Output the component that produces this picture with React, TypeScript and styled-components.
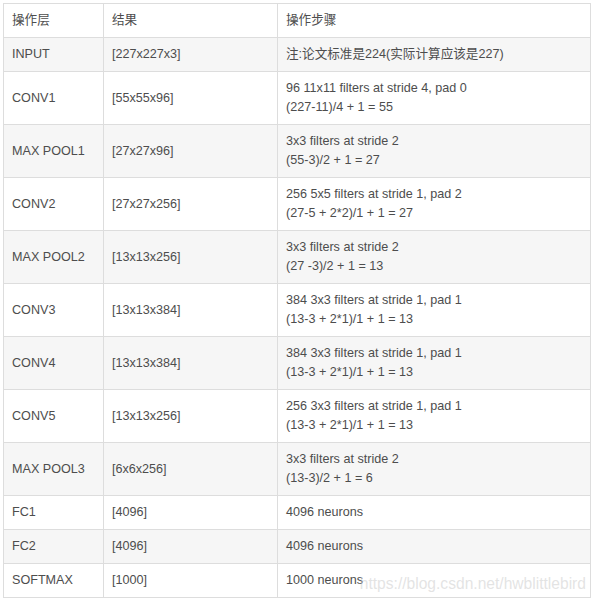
import React from "react";
import styled, { createGlobalStyle } from "styled-components";

const Global = createGlobalStyle`
  html, body { margin: 0; padding: 0; background: #fff; }
  body { font-family: "Liberation Sans", Arial, sans-serif; }
`;

const Wrap = styled.div`
  position: relative;
  padding: 3px;
  width: 588px;
`;

const Table = styled.table`
  border-collapse: collapse;
  width: 588px;
  table-layout: fixed;
  font-family: "Liberation Sans", Arial, "Noto Sans CJK SC", sans-serif;
  font-size: 12.6px;
  color: #4d4d4d;
`;

const Row = styled.tr<{ $striped?: boolean }>`
  background: ${(p) => (p.$striped ? "#f6f6f6" : "#ffffff")};
`;

const Cell = styled.td`
  border: 1px solid #dddddd;
  padding: 7px 8px;
  line-height: 19px;
  height: 19px;
  vertical-align: middle;
  text-align: left;
  font-weight: normal;
`;

const HeadCell = styled(Cell).attrs({ as: "th" })``;

const Watermark = styled.div`
  position: absolute;
  right: 8px;
  bottom: 8px;
  font-family: "Liberation Sans", Arial, sans-serif;
  font-size: 15.6px;
  color: rgba(200, 200, 200, 0.5);
  pointer-events: none;
  white-space: nowrap;
`;

const rows: [string, string, string[]][] = [
  ["INPUT", "[227x227x3]", ["注:论文标准是224(实际计算应该是227)"]],
  ["CONV1", "[55x55x96]", ["96 11x11 filters at stride 4, pad 0", "(227-11)/4 + 1 = 55"]],
  ["MAX POOL1", "[27x27x96]", ["3x3 filters at stride 2", "(55-3)/2 + 1 = 27"]],
  ["CONV2", "[27x27x256]", ["256 5x5 filters at stride 1, pad 2", "(27-5 + 2*2)/1 + 1 = 27"]],
  ["MAX POOL2", "[13x13x256]", ["3x3 filters at stride 2", "(27 -3)/2 + 1 = 13"]],
  ["CONV3", "[13x13x384]", ["384 3x3 filters at stride 1, pad 1", "(13-3 + 2*1)/1 + 1 = 13"]],
  ["CONV4", "[13x13x384]", ["384 3x3 filters at stride 1, pad 1", "(13-3 + 2*1)/1 + 1 = 13"]],
  ["CONV5", "[13x13x256]", ["256 3x3 filters at stride 1, pad 1", "(13-3 + 2*1)/1 + 1 = 13"]],
  ["MAX POOL3", "[6x6x256]", ["3x3 filters at stride 2", "(13-3)/2 + 1 = 6"]],
  ["FC1", "[4096]", ["4096 neurons"]],
  ["FC2", "[4096]", ["4096 neurons"]],
  ["SOFTMAX", "[1000]", ["1000 neurons"]],
];

export default function App() {
  return (
    <Wrap>
      <Global />
      <Table>
        <colgroup>
          <col style={{ width: 100 }} />
          <col style={{ width: 174 }} />
          <col />
        </colgroup>
        <thead>
          <Row>
            <HeadCell>操作层</HeadCell>
            <HeadCell>结果</HeadCell>
            <HeadCell>操作步骤</HeadCell>
          </Row>
        </thead>
        <tbody>
          {rows.map(([a, b, c], i) => (
            <Row key={a + i} $striped={i % 2 === 0}>
              <Cell>{a}</Cell>
              <Cell>{b}</Cell>
              <Cell>
                {c.map((line, j) => (
                  <React.Fragment key={j}>
                    {j > 0 && <br />}
                    {line}
                  </React.Fragment>
                ))}
              </Cell>
            </Row>
          ))}
        </tbody>
      </Table>
      <Watermark>https://blog.csdn.net/hwblittlebird</Watermark>
    </Wrap>
  );
}
